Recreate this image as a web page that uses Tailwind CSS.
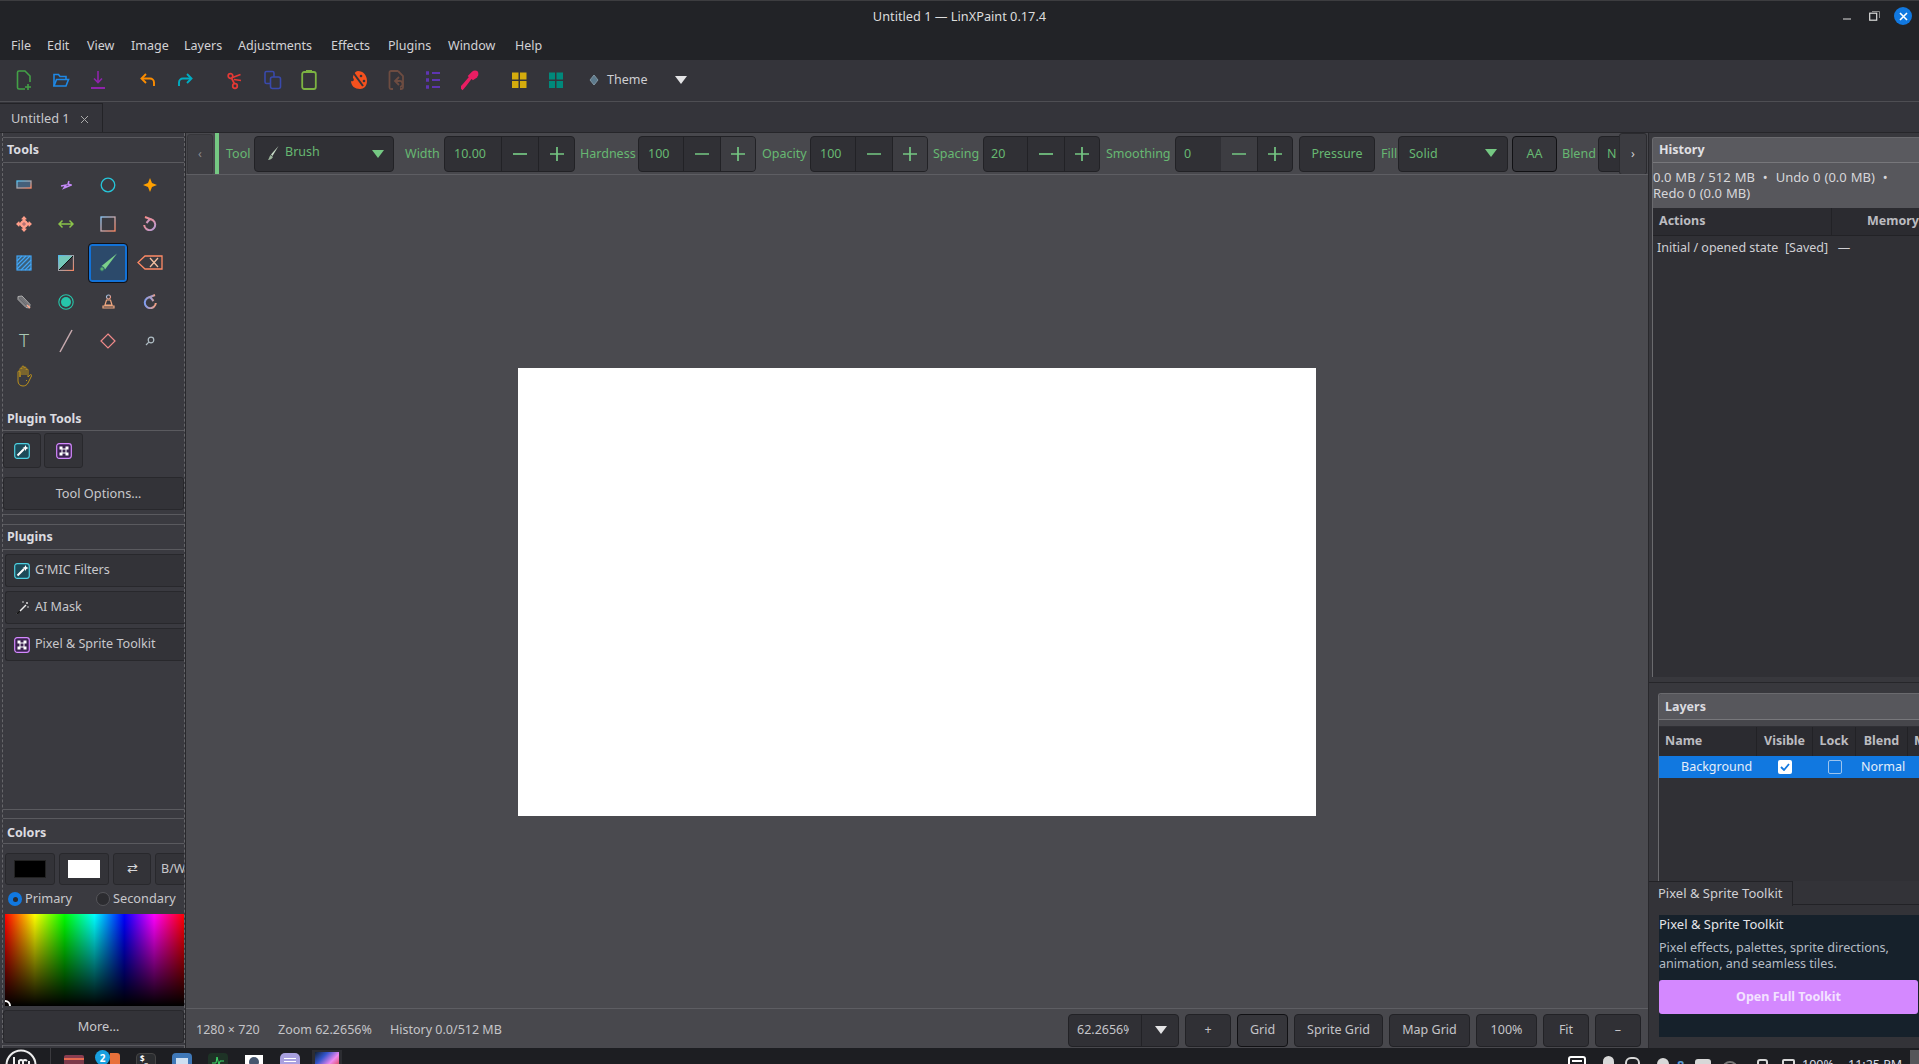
<!doctype html>
<html>
<head>
<meta charset="utf-8">
<script src="https://cdn.jsdelivr.net/npm/@tailwindcss/browser@4"></script>
<title>LinXPaint</title>
</head>
<body class="m-0 overflow-hidden bg-[#1d1e22]">
<svg class="absolute w-0 h-0">
  <defs>
    <linearGradient id="g1" x1="0" y1="0" x2="1" y2="1"><stop offset="0" stop-color="#4fc3f7"/><stop offset="1" stop-color="#ff8a65"/></linearGradient>
    <linearGradient id="g2" x1="0" y1="0" x2="1" y2="1"><stop offset="0" stop-color="#ff8a80"/><stop offset="1" stop-color="#b39ddb"/></linearGradient>
    <linearGradient id="g3" x1="0" y1="0" x2="1" y2="1"><stop offset="0" stop-color="#90caf9"/><stop offset="1" stop-color="#ff8a65"/></linearGradient>
    <linearGradient id="g5" x1="0" y1="0" x2="1" y2="0"><stop offset="0" stop-color="#7e9cf0"/><stop offset="1" stop-color="#f5a080"/></linearGradient>
  </defs>
</svg>
<div class="w-[1919px] h-[1064px] flex flex-col overflow-hidden font-['Noto_Sans',sans-serif] text-[12.5px] text-[#c8c8cc]">

  <!-- title bar -->
  <div class="relative h-[30px] shrink-0 bg-[#222327] border-t border-[#3d3d40] flex items-center justify-center text-[12.75px] text-[#dcdcdc] pt-[2px]">
    Untitled 1 — LinXPaint 0.17.4
    <svg class="absolute left-[1843px] top-[12px]" width="9" height="10" viewBox="0 0 9 10"><path d="M0 6h8" stroke="#ddd" stroke-width="1"/></svg>
    <svg class="absolute left-[1869px] top-[9px]" width="11" height="11" viewBox="0 0 11 11"><path d="M3 1.5h7.5V8" fill="none" stroke="#888" stroke-width="1"/><rect x=".7" y="3.2" width="7" height="7" fill="none" stroke="#ddd" stroke-width="1.2"/></svg>
    <div class="absolute left-[1894px] top-[6px] w-[18px] h-[18px] rounded-full bg-[#1178e0] flex items-center justify-center">
      <svg width="9" height="9" viewBox="0 0 9 9"><path d="M1 1l7 7M8 1l-7 7" stroke="#fff" stroke-width="1.6"/></svg>
    </div>
  </div>

  <!-- menu bar -->
  <div class="h-[30px] shrink-0 bg-[#222327] flex items-center pl-[11px] pt-[3px] text-[12.5px] text-[#d2d2d6]">
    <span class="w-[36px]">File</span><span class="w-[40px]">Edit</span><span class="w-[44px]">View</span><span class="w-[53px]">Image</span><span class="w-[54px]">Layers</span><span class="w-[93px]">Adjustments</span><span class="w-[57px]">Effects</span><span class="w-[60px]">Plugins</span><span class="w-[67px]">Window</span><span>Help</span>
  </div>

  <!-- main toolbar -->
  <div class="relative h-[42px] shrink-0 bg-[#34343a] border-b border-[#4e4e53] flex items-center pb-[1px]">
    <svg class="ml-[16px]" width="16" height="22" viewBox="0 0 16 22" fill="none" stroke="#43a047" stroke-width="1.6"><path d="M9 20H3a1.5 1.5 0 0 1-1.5-1.5v-15A1.5 1.5 0 0 1 3 2h6l5 5v6"/><path d="M12 15v6M9 18h6"/></svg>
    <svg class="ml-[20px]" width="18" height="18" viewBox="0 0 18 18" fill="none" stroke="#1e88e5" stroke-width="1.6"><path d="M2 15V3.5h4.5l1.5 2h6v3"/><path d="M2 15l2.5-6.5h12L14 15z"/></svg>
    <svg class="ml-[20px]" width="16" height="20" viewBox="0 0 16 20" fill="none" stroke="#8e24aa" stroke-width="1.6"><path d="M8 1v11M4 8.5l4 4 4-4"/><path d="M1 18h14" stroke-width="2"/></svg>
    <svg class="ml-[33px]" width="18" height="18" viewBox="0 0 18 18" fill="none" stroke="#fb8c00" stroke-width="1.9"><path d="M7 3L2.5 7.5 7 12"/><path d="M3 7.5h8a4 4 0 0 1 4 4V15"/></svg>
    <svg class="ml-[19px]" width="18" height="18" viewBox="0 0 18 18" fill="none" stroke="#00acc1" stroke-width="1.9"><path d="M11 3l4.5 4.5L11 12"/><path d="M15 7.5H7a4 4 0 0 0-4 4V15"/></svg>
    <svg class="ml-[33px]" width="16" height="20" viewBox="0 0 16 20" fill="none" stroke="#e53935" stroke-width="1.7"><circle cx="3.5" cy="6" r="2.3"/><circle cx="8" cy="16" r="2.3"/><path d="M5.5 7.5l8-3M4.5 8l3 6M7 9.5l7 1"/></svg>
    <svg class="ml-[21px]" width="18" height="20" viewBox="0 0 18 20" fill="none" stroke="#3949ab" stroke-width="1.6"><rect x="1" y="1.5" width="9" height="12" rx="1.5"/><rect x="6.5" y="7" width="10" height="11.500" rx="2" fill="#34343a"/></svg>
    <svg class="ml-[19px]" width="16" height="22" viewBox="0 0 16 22" fill="none" stroke="#7cb342" stroke-width="1.8"><rect x="1.2" y="3" width="13.6" height="17" rx="2"/><path d="M5 2.5h6" stroke-width="3"/></svg>
    <svg class="ml-[33px]" width="18" height="22" viewBox="0 0 18 22" fill="#f4511e"><path d="M8 2c5 0 9 4 9 10 0 5-3 8-7 8-5 0-9-3-9-8 2 1 4-1 2-3 0-3 2-7 5-7z"/><path d="M2 2l11 15" stroke="#34343a" stroke-width="2"/><circle cx="11" cy="7" r="1.3" fill="#34343a"/><circle cx="14" cy="12" r="1.3" fill="#34343a"/></svg>
    <svg class="ml-[20px]" width="17" height="22" viewBox="0 0 17 22" fill="none" stroke="#6d4c41" stroke-width="1.8"><path d="M10 2H3a1.5 1.5 0 0 0-1.5 1.5v15A1.5 1.5 0 0 0 3 20h2"/><path d="M10 2l5 5v11.5A1.5 1.5 0 0 1 13.500 20H12"/><path d="M11 8l-4 4 4 4M7 12h4a3 3 0 0 1 1 6"/></svg>
    <svg class="ml-[20px]" width="16" height="20" viewBox="0 0 16 20" fill="none" stroke="#5e35b1" stroke-width="2"><path d="M1 3h3M1 10h3M1 17h3" stroke-width="3.400"/><path d="M7 3h8M7 10h8M7 17h8"/></svg>
    <svg class="ml-[20px]" width="18" height="22" viewBox="0 0 18 22" fill="#e91e63"><path d="M11 4l4 4-3 2-1.500-1.500-6 8-3 3.500-1.500-1.500 3-3.500 6-7L8 7z" stroke="#e91e63" stroke-width="1.800"/><circle cx="14" cy="5" r="3.400"/></svg>
    <svg class="ml-[33px]" width="15" height="20" viewBox="0 0 15 20" fill="#d4ac0d"><rect x="0" y="2.500" width="6.500" height="7"/><rect x="8" y="2.500" width="6.500" height="7"/><rect x="0" y="11" width="6.500" height="7"/><rect x="8" y="11" width="6.500" height="7"/></svg>
    <svg class="ml-[22px]" width="14" height="20" viewBox="0 0 14 20" fill="#00897b"><rect x="0" y="2.500" width="6" height="7"/><rect x="7.500" y="2.500" width="6.500" height="7"/><rect x="0" y="11" width="6" height="7"/><rect x="7.500" y="11" width="6.500" height="7"/></svg>
    <svg class="ml-[26px]" width="10" height="14" viewBox="0 0 10 14"><path d="M5 2l4 5-4 5-4-5z" fill="#5d7a8c" stroke="#8196a3"/></svg>
    <span class="ml-[8px] text-[#cfcfd3] text-[12.5px] pt-[1px]">Theme</span>
    <svg class="ml-[28px]" width="12" height="8" viewBox="0 0 12 8"><path d="M0 0h12L6 8z" fill="#e4e4e6"/></svg>
  </div>

  <!-- tab strip -->
  <div class="h-[31px] shrink-0 bg-[#34343a] flex items-end pt-[2px] border-b border-[#26262a]">
    <div class="w-[103px] h-[29px] border-t border-r border-[#232327] bg-[#34343a] flex items-center pl-[11px] pt-[2px] text-[12.75px] text-[#c8c8cc]">
      <span>Untitled 1</span>
      <svg class="ml-[10px]" width="9" height="9" viewBox="0 0 9 9"><path d="M1 1l7 7M8 1l-7 7" stroke="#aaa" stroke-width="1"/></svg>
    </div>
  </div>

  <!-- main area -->
  <div class="flex-1 min-h-0 flex">

    <!-- left dock -->
    <div class="w-[186px] shrink-0 bg-[#3a3a40] border-r border-[#28282c] flex flex-col pl-[2px] pr-[1px]">
      <div class="flex-1 min-h-0 flex flex-col border-x border-dashed border-[#66666a] w-[183px] overflow-hidden">
        <!-- tools -->
        <div class="mt-[4px] h-[26px] shrink-0 border-y border-[#5a5a5f] flex items-center pl-[4px] pt-[1px] font-bold text-[12.5px] text-[#dcdce0]">Tools</div>
        <div class="mt-[2px] shrink-0 grid grid-cols-[42px_42px_42px_42px] auto-rows-[39px] justify-items-center items-center">
          <svg width="16" height="10" viewBox="0 0 16 10"><rect x="1" y="1" width="14" height="7" fill="#45607a" stroke="url(#g1)" stroke-width="1.300"/></svg>
          <svg width="12" height="10" viewBox="0 0 12 10" fill="none" stroke="#c58af9" stroke-width="1.500"><path d="M1 6l5-1-2 3 7-3-3-1 1-3"/></svg>
          <svg width="16" height="16" viewBox="0 0 16 16"><circle cx="8" cy="8" r="6.800" fill="none" stroke="#26c6da" stroke-width="1.300"/></svg>
          <svg width="14" height="14" viewBox="0 0 14 14"><path d="M7 0l2 5 5 2-5 2-2 5-2-5-5-2 5-2z" fill="#ffa000"/></svg>

          <svg width="16" height="16" viewBox="0 0 16 16" fill="#ff9e8a"><path d="M8 0l3 3.200H9.500v2.300h-3V3.200H5zM8 16l-3-3.200h1.500v-2.300h3v2.300H11zM0 8l3.200-3v1.500h2.300v3H3.200V11zM16 8l-3.200 3V9.500h-2.300v-3h2.300V5z"/><circle cx="8" cy="8" r="3.800"/><path d="M6 8h4M8 6v4" stroke="#8a5a6a" stroke-width=".8"/></svg>
          <svg width="16" height="10" viewBox="0 0 16 10" fill="none" stroke="#8bc34a" stroke-width="1.500"><path d="M1 5h14M4.500 1.500L1 5l3.500 3.500M11.500 1.500L15 5l-3.500 3.500"/></svg>
          <svg width="16" height="16" viewBox="0 0 16 16"><rect x="1" y="1" width="14" height="14" fill="none" stroke="url(#g3)" stroke-width="1.300"/></svg>
          <svg width="14" height="15" viewBox="0 0 14 15" fill="none" stroke="url(#g2)" stroke-width="2"><path d="M2 1L7 3 3.500 7"/><path d="M6 3.200a5.500 5.500 0 1 1-4.800 5.800"/></svg>

          <svg width="16" height="16" viewBox="0 0 16 16"><rect x="1" y="1" width="14" height="14" fill="#3a5f7a" stroke="#42a5f5" stroke-width="1.200"/><path d="M1 6l5-5M1 10l9-9M1 14L14 1M5 15L15 5M9 15l6-6M13 15l2-2" stroke="#42a5f5" stroke-width="1.200"/></svg>
          <svg width="16" height="16" viewBox="0 0 16 16"><path d="M1 1h14L1 15z" fill="#74c7b8"/><path d="M15 1v14H1z" fill="#3a3a40"/><rect x=".6" y=".6" width="14.800" height="14.800" fill="none" stroke="url(#g1)" stroke-width="1.100"/><path d="M1 15L15 1" stroke="#111" stroke-width="1"/></svg>
          <div class="w-[38px] h-[38px] rounded-[3px] border-2 border-[#1272d8] outline outline-1 outline-[#101015] bg-[#2c4a6b] flex items-center justify-center">
            <svg width="20" height="20" viewBox="0 0 20 20"><path d="M19 .5L3.500 13 7 16.500z" fill="#7bd08a"/><circle cx="4" cy="16" r="2.200" fill="#5fb070" stroke="#26566b"/></svg>
          </div>
          <svg width="26" height="15" viewBox="0 0 26 15" fill="none" stroke="#ff8a65" stroke-width="1.300"><path d="M8 1h17v13H8L1 7.500z"/><path d="M13 3l8 9M21 3l-8 9" stroke="#f5c0a0"/></svg>

          <svg width="14" height="14" viewBox="0 0 14 14"><path d="M1 1.500L5 1 13 9.500l-.5 3.500-3.500-.5-8-8z" fill="#6a6a6e" stroke="#b0b0b0"/><path d="M3 2.500L11 11M2 4l8 8M5 2.500l7 8" stroke="#8a8a8e" stroke-width=".6"/><path d="M10 10l3 3" stroke="#ffab91" stroke-width="1.500"/></svg>
          <svg width="16" height="16" viewBox="0 0 16 16"><circle cx="8" cy="8" r="7.200" fill="none" stroke="#26c6aa" stroke-width="1.100"/><circle cx="8" cy="8" r="5" fill="#26c6aa"/></svg>
          <svg width="13" height="15" viewBox="0 0 13 15" fill="none" stroke="url(#g3)" stroke-width="1.200"><circle cx="6.500" cy="3" r="2"/><path d="M4.500 6h4L10 11H3zM1 14v-2h11v2z" stroke="#f0a880"/></svg>
          <svg width="14" height="15" viewBox="0 0 14 15" fill="none" stroke="url(#g5)" stroke-width="2"><path d="M12 1L7 3 10.500 7"/><path d="M8 3.200a5.500 5.500 0 1 0 4.800 5.800"/></svg>

          <span class="text-[19px] leading-none text-[#a9c8b4] font-light">T</span>
          <svg width="14" height="24" viewBox="0 0 14 24"><path d="M13 1L1 23" stroke="url(#g3)" stroke-width="1.500"/></svg>
          <svg width="16" height="16" viewBox="0 0 16 16"><path d="M8 1l7 7-7 7-7-7z" fill="none" stroke="#f08a8a" stroke-width="1.200"/></svg>
          <svg width="10" height="10" viewBox="0 0 10 10" fill="none" stroke="#b0bec5" stroke-width="1.200"><circle cx="6" cy="4" r="2.800"/><path d="M3.800 6.200L1 9"/></svg>

          <svg class="mt-[-7px]" width="16" height="22" viewBox="0 0 16 22" fill="none" stroke="#c89a18" stroke-width=".9"><path d="M4 12V4a1 1 0 0 1 2 0V2a1 1 0 0 1 2 0v1a1 1 0 0 1 2 0v2a1 1 0 0 1 2 0v7l2-2c1-1 2 0 1.500 1L12 18c-1 2-3 3-5 3-3 0-5-2-5-5V7a1 1 0 0 1 2 0z"/><path d="M6 4v6M8 3v7M10 5v5M11 15l-1 1"/></svg>
        </div>

        <!-- plugin tools -->
        <div class="mt-[6px] h-[26px] shrink-0 border-b border-[#5a5a5f] flex items-center pl-[4px] pt-[4px] font-bold text-[12.5px] text-[#dcdce0]">Plugin Tools</div>
        <div class="mt-[2px] h-[35px] shrink-0 flex gap-[3px]">
          <div class="w-[38px] rounded-[3px] border border-[#28282c] bg-[#333338] flex items-center justify-center">
            <svg width="16" height="16" viewBox="0 0 16 16"><rect x=".7" y=".7" width="14.600" height="14.600" rx="2.500" fill="#1d4a58" stroke="#4dd0e1" stroke-width="1.200"/><path d="M3.500 12.500L10 6" stroke="#fff" stroke-width="2"/><path d="M11.500 2l.9 2.100 2.100.9-2.100.9-.9 2.100-.9-2.100L8.500 5l2.100-.9z" fill="#fff"/></svg>
          </div>
          <div class="w-[39px] rounded-[3px] border border-[#28282c] bg-[#333338] flex items-center justify-center">
            <svg width="16" height="16" viewBox="0 0 16 16"><rect x=".7" y=".7" width="14.600" height="14.600" rx="2.500" fill="#3b2350" stroke="#d488ff" stroke-width="1.200"/><rect x="5.500" y="5.500" width="5" height="5" fill="#fff"/><rect x="3.500" y="3.500" width="3" height="3" fill="#fff"/><rect x="9.500" y="3.500" width="3" height="3" fill="#fff"/><rect x="3.500" y="9.500" width="3" height="3" fill="#fff"/><rect x="9.500" y="9.500" width="3" height="3" fill="#fff"/><rect x="6.500" y="6.500" width="3" height="3" fill="#3b2350"/></svg>
          </div>
        </div>
        <div class="mt-[9px] h-[33px] shrink-0 rounded-[3px] border border-[#28282c] bg-[#333338] flex items-center justify-center text-[12.75px] text-[#c8c8cc] pl-[10px] pt-[1px]">Tool Options…</div>
        <div class="mt-[4px] h-[11px] shrink-0 border-y border-[#5a5a5f]"></div>

        <!-- plugins -->
        <div class="h-[25px] shrink-0 border-b border-[#5a5a5f] flex items-center pl-[4px] font-bold text-[12.5px] text-[#dcdce0]">Plugins</div>
        <div class="mt-[4px] pl-[2px] flex flex-col gap-[4px] shrink-0">
          <div class="h-[33px] rounded-l-[3px] border border-r-0 border-[#28282c] bg-[#333338] flex items-center pl-[8px] gap-[5px]">
            <svg width="16" height="16" viewBox="0 0 16 16"><rect x=".7" y=".7" width="14.600" height="14.600" rx="2.500" fill="#1d4a58" stroke="#4dd0e1" stroke-width="1.200"/><path d="M3.500 12.500L10 6" stroke="#fff" stroke-width="2"/><path d="M11.500 2l.9 2.100 2.100.9-2.100.9-.9 2.100-.9-2.100L8.500 5l2.100-.9z" fill="#fff"/></svg>
            <span class="text-[12.6px]">G'MIC Filters</span>
          </div>
          <div class="h-[33px] rounded-l-[3px] border border-r-0 border-[#28282c] bg-[#333338] flex items-center pl-[8px] gap-[5px]">
            <svg width="16" height="16" viewBox="0 0 16 16"><path d="M3 14L12 5" stroke="#eee" stroke-width="1.500"/><path d="M3 14l3-3" stroke="#111" stroke-width="1.800"/><circle cx="13" cy="3" r="1" fill="#ddd"/><circle cx="9" cy="2" r=".8" fill="#ddd"/><circle cx="14" cy="7" r=".8" fill="#ddd"/></svg>
            <span class="text-[12.6px]">AI Mask</span>
          </div>
          <div class="h-[33px] rounded-l-[3px] border border-r-0 border-[#28282c] bg-[#333338] flex items-center pl-[8px] gap-[5px]">
            <svg width="16" height="16" viewBox="0 0 16 16"><rect x=".7" y=".7" width="14.600" height="14.600" rx="2.500" fill="#3b2350" stroke="#d488ff" stroke-width="1.200"/><rect x="5.500" y="5.500" width="5" height="5" fill="#fff"/><rect x="3.500" y="3.500" width="3" height="3" fill="#fff"/><rect x="9.500" y="3.500" width="3" height="3" fill="#fff"/><rect x="3.500" y="9.500" width="3" height="3" fill="#fff"/><rect x="9.500" y="9.500" width="3" height="3" fill="#fff"/><rect x="6.500" y="6.500" width="3" height="3" fill="#3b2350"/></svg>
            <span class="text-[12.6px]">Pixel &amp; Sprite Toolkit</span>
          </div>
        </div>
        <div class="flex-1 min-h-0"></div>

        <!-- colors -->
        <div class="h-[10px] shrink-0 border-y border-[#5a5a5f]"></div>
        <div class="h-[25px] shrink-0 border-b border-[#5a5a5f] flex items-center pl-[4px] pt-[4px] font-bold text-[12.5px] text-[#dcdce0]">Colors</div>
        <div class="mt-[9px] h-[32px] shrink-0 flex gap-[4px] pl-[2px]">
          <div class="w-[50px] shrink-0 rounded-[3px] border border-[#28282c] bg-[#333338] flex items-center justify-center"><div class="w-[32px] h-[18px] bg-black border border-[#222]"></div></div>
          <div class="w-[50px] shrink-0 rounded-[3px] border border-[#28282c] bg-[#333338] flex items-center justify-center"><div class="w-[32px] h-[18px] bg-white"></div></div>
          <div class="w-[38px] shrink-0 rounded-[3px] border border-[#28282c] bg-[#333338] flex items-center justify-center text-[13px] text-[#d8d8dc]">⇄</div>
          <div class="w-[36px] shrink-0 rounded-l-[3px] border border-[#28282c] bg-[#333338] flex items-center pl-[5px] text-[#c8c8cc]">B/W</div>
        </div>
        <div class="mt-[6px] h-[16px] shrink-0 flex items-center pl-[5px] text-[12.75px]">
          <div class="w-[14px] h-[14px] rounded-full bg-[#1178e0] flex items-center justify-center"><div class="w-[5px] h-[5px] rounded-full bg-[#2a2a2e]"></div></div>
          <span class="ml-[3px] w-[71px]">Primary</span>
          <div class="w-[14px] h-[14px] rounded-full bg-[#2c2c30] border border-[#55555a]"></div>
          <span class="ml-[3px]">Secondary</span>
        </div>
        <div class="relative mt-[7px] ml-[2px] h-[92px] shrink-0 bg-[linear-gradient(to_bottom,transparent,#000),linear-gradient(to_right,#f00,#ff0,#0f0,#0ff,#00f,#f0f,#f00)] overflow-hidden">
          <div class="absolute left-[-6px] bottom-[-6px] w-[12px] h-[12px] rounded-full border-2 border-white"></div>
        </div>
        <div class="mt-[4px] h-[33px] shrink-0 rounded-[3px] border border-[#28282c] bg-[#333338] flex items-center justify-center pl-[10px] pt-[1px] text-[12.75px]">More…</div>
        <div class="mt-[2px] h-[3px] shrink-0 border-t border-[#5a5a5f]"></div>
      </div>
    </div>

    <!-- centre -->
    <div class="flex-1 min-w-0 flex flex-col bg-[#4a4a4f]">
      <!-- tool options bar -->
      <div class="h-[42px] shrink-0 flex items-center bg-[#48484d] border-b border-[#5e5e63] overflow-hidden pt-[1px] text-[12.5px] text-[#67b872] relative">
        <div class="ml-[1px] w-[26px] h-[41px] shrink-0 bg-[#3e3e43] border border-[#36363a] rounded-[3px] flex items-center justify-center text-[#8a8a8e]">‹</div>
        <div class="ml-[2px] w-[4px] h-[42px] shrink-0 bg-[#75c883]"></div>
        <span class="ml-[7px] w-[28px] shrink-0">Tool</span>
        <div class="h-[36px] w-[140px] shrink-0 rounded-[4px] border border-[#222226] bg-[#303035] flex items-center pl-[11px] pb-[3px]">
          <svg width="14" height="16" viewBox="0 0 14 16"><path d="M12.500 1L5 9.500l1.500 1.500z" fill="#c8dcc8"/><path d="M4.500 10L7 12c-1 2-3 3-5 3 1-1 1-3 2.500-5z" fill="#9bb39b"/></svg>
          <span class="ml-[5px]">Brush</span>
          <svg class="ml-auto mr-[9px] mt-[3px]" width="12" height="8" viewBox="0 0 12 8"><path d="M0 0h12L6 8z" fill="#75c883"/></svg>
        </div>
        <span class="ml-[11px] w-[39px] shrink-0">Width</span>
        <div class="h-[36px] w-[131px] shrink-0 flex rounded-[4px] border border-[#222226] bg-[#303035]">
          <div class="w-[57px] border-r border-[#222226] flex items-center pl-[9px]">10.00</div>
          <div class="w-[37px] border-r border-[#222226] flex items-center justify-center"><svg width="14" height="14" viewBox="0 0 14 14"><path d="M0 7h14" stroke="#75c883" stroke-width="1.700"/></svg></div>
          <div class="flex-1 flex items-center justify-center"><svg width="14" height="14" viewBox="0 0 14 14"><path d="M0 7h14M7 0v14" stroke="#75c883" stroke-width="1.700"/></svg></div>
        </div>
        <span class="ml-[5px] w-[58px] shrink-0">Hardness</span>
        <div class="h-[36px] w-[118px] shrink-0 flex rounded-[4px] border border-[#222226] bg-[#303035] overflow-hidden">
          <div class="w-[45px] border-r border-[#222226] flex items-center pl-[9px]">100</div>
          <div class="w-[37px] border-r border-[#222226] flex items-center justify-center"><svg width="14" height="14" viewBox="0 0 14 14"><path d="M0 7h14" stroke="#75c883" stroke-width="1.700"/></svg></div>
          <div class="flex-1 bg-[#3d3d42] flex items-center justify-center"><svg width="14" height="14" viewBox="0 0 14 14"><path d="M0 7h14M7 0v14" stroke="#75c883" stroke-width="1.700"/></svg></div>
        </div>
        <span class="ml-[6px] w-[48px] shrink-0">Opacity</span>
        <div class="h-[36px] w-[118px] shrink-0 flex rounded-[4px] border border-[#222226] bg-[#303035] overflow-hidden">
          <div class="w-[45px] border-r border-[#222226] flex items-center pl-[9px]">100</div>
          <div class="w-[37px] border-r border-[#222226] flex items-center justify-center"><svg width="14" height="14" viewBox="0 0 14 14"><path d="M0 7h14" stroke="#75c883" stroke-width="1.700"/></svg></div>
          <div class="flex-1 bg-[#3d3d42] flex items-center justify-center"><svg width="14" height="14" viewBox="0 0 14 14"><path d="M0 7h14M7 0v14" stroke="#75c883" stroke-width="1.700"/></svg></div>
        </div>
        <span class="ml-[5px] w-[50px] shrink-0">Spacing</span>
        <div class="h-[36px] w-[117px] shrink-0 flex rounded-[4px] border border-[#222226] bg-[#303035]">
          <div class="w-[44px] border-r border-[#222226] flex items-center pl-[7px]">20</div>
          <div class="w-[37px] border-r border-[#222226] flex items-center justify-center"><svg width="14" height="14" viewBox="0 0 14 14"><path d="M0 7h14" stroke="#75c883" stroke-width="1.700"/></svg></div>
          <div class="flex-1 flex items-center justify-center"><svg width="14" height="14" viewBox="0 0 14 14"><path d="M0 7h14M7 0v14" stroke="#75c883" stroke-width="1.700"/></svg></div>
        </div>
        <span class="ml-[6px] w-[69px] shrink-0">Smoothing</span>
        <div class="h-[36px] w-[118px] shrink-0 flex rounded-[4px] border border-[#222226] bg-[#303035] overflow-hidden">
          <div class="w-[45px] flex items-center pl-[8px]">0</div>
          <div class="w-[37px] border-r border-[#222226] bg-[#3d3d42] flex items-center justify-center"><svg width="14" height="14" viewBox="0 0 14 14"><path d="M0 7h14" stroke="#75c883" stroke-width="1.700"/></svg></div>
          <div class="flex-1 flex items-center justify-center"><svg width="14" height="14" viewBox="0 0 14 14"><path d="M0 7h14M7 0v14" stroke="#75c883" stroke-width="1.700"/></svg></div>
        </div>
        <div class="ml-[6px] h-[36px] w-[76px] shrink-0 rounded-[4px] border border-[#222226] bg-[#303035] flex items-center justify-center">Pressure</div>
        <span class="ml-[6px] w-[17px] shrink-0">Fill</span>
        <div class="h-[36px] w-[110px] shrink-0 rounded-[4px] border border-[#222226] bg-[#303035] flex items-center pl-[10px]">
          <span>Solid</span>
          <svg class="ml-auto mr-[10px] mb-[3px]" width="12" height="8" viewBox="0 0 12 8"><path d="M0 0h12L6 8z" fill="#75c883"/></svg>
        </div>
        <div class="ml-[4px] h-[36px] w-[45px] shrink-0 rounded-[4px] border border-[#111114] bg-[#36363b] flex items-center justify-center">AA</div>
        <span class="ml-[5px] w-[36px] shrink-0">Blend</span>
        <div class="h-[36px] w-[30px] shrink-0 rounded-l-[4px] border border-[#222226] bg-[#303035] flex items-center pl-[8px]">N</div>
        <div class="absolute right-[1px] top-0 w-[28px] h-[42px] bg-[#3c3c41] border border-[#2a2a2e] rounded-[3px] flex items-center justify-center text-[#cfcfd3]">›</div>
      </div>

      <!-- canvas -->
      <div class="flex-1 min-h-0 flex items-center justify-center">
        <div class="w-[798px] h-[448px] bg-white"></div>
      </div>

      <!-- status bar -->
      <div class="h-[40px] shrink-0 bg-[#48484d] border-t border-[#5e5e63] flex items-center pl-[10px] text-[12.5px] text-[#c4c4c8]">
        <span class="w-[82px] pt-[4px]">1280 × 720</span>
        <span class="w-[112px] pt-[4px]">Zoom 62.2656%</span>
        <span class="pt-[4px]">History 0.0/512 MB</span>
        <div class="ml-auto flex gap-[6px] mr-[7px] pt-[3px]">
          <div class="w-[111px] h-[33px] flex rounded-[4px] border border-[#222226] bg-[#303035]">
            <div class="w-[73px] border-r border-[#222226] flex items-center pl-[8px]"><span class="w-[52px] overflow-hidden whitespace-nowrap">62.2656%</span></div>
            <div class="flex-1 flex items-center justify-center pl-[2px]"><svg width="12" height="8" viewBox="0 0 12 8"><path d="M0 0h12L6 8z" fill="#e4e4e6"/></svg></div>
          </div>
          <div class="w-[46px] h-[33px] rounded-[4px] border border-[#222226] bg-[#303035] flex items-center justify-center">+</div>
          <div class="w-[51px] h-[33px] rounded-[4px] border border-[#111114] bg-[#36363b] flex items-center justify-center">Grid</div>
          <div class="w-[89px] h-[33px] rounded-[4px] border border-[#222226] bg-[#303035] flex items-center justify-center">Sprite Grid</div>
          <div class="w-[81px] h-[33px] rounded-[4px] border border-[#222226] bg-[#303035] flex items-center justify-center">Map Grid</div>
          <div class="w-[61px] h-[33px] rounded-[4px] border border-[#222226] bg-[#303035] flex items-center justify-center">100%</div>
          <div class="w-[46px] h-[33px] rounded-[4px] border border-[#222226] bg-[#303035] flex items-center justify-center">Fit</div>
          <div class="w-[46px] h-[33px] rounded-[4px] border border-[#222226] bg-[#303035] flex items-center justify-center">–</div>
        </div>
      </div>
    </div>

    <!-- right dock -->
    <div class="w-[271px] shrink-0 bg-[#38383d] border-l border-[#28282c] flex flex-col">
      <div class="h-[550px] shrink-0 pl-[3px] pt-[4px] pb-[5px] border-b border-[#26262a]">
        <div class="h-full flex flex-col border-l border-t border-[#6a6a6e] rounded-tl-[3px] bg-[#57575c] overflow-hidden">
          <div class="h-[25px] shrink-0 border-b border-[#77777b] flex items-center pl-[6px] pt-[1px] font-bold text-[#e0e0e4] bg-[#5a5a5f]">History</div>
          <div class="h-[45px] shrink-0 leading-[15.500px] pt-[7px] text-[13px] [word-spacing:0.6px] text-[#d6d6da] whitespace-pre">0.0 MB / 512 MB  •  Undo 0 (0.0 MB)  •
Redo 0 (0.0 MB)</div>
          <div class="flex-1 min-h-0 bg-[#303035] flex flex-col">
            <div class="h-[28px] shrink-0 bg-[#2b2b30] border-b border-[#222226] flex items-center font-bold text-[#bcbcc0]">
              <div class="w-[179px] h-full border-r border-[#222226] flex items-center pl-[6px]">Actions</div>
              <div class="flex-1 flex items-center justify-end whitespace-nowrap overflow-hidden"><span class="ml-[35px]">Memory</span></div>
            </div>
            <div class="pl-[4px] pt-[3px] text-[#cfcfd3] whitespace-pre">Initial / opened state  [Saved]   —</div>
          </div>
        </div>
      </div>
      <div class="h-[198px] shrink-0 pl-[9px] pt-[10px]">
        <div class="h-full flex flex-col border-l border-t border-[#6a6a6e] rounded-tl-[3px] overflow-hidden">
          <div class="h-[26px] shrink-0 border-b border-[#77777b] flex items-center pl-[6px] pt-[2px] font-bold text-[#dcdce0] bg-[#57575c]">Layers</div>
          <div class="h-[6px] shrink-0 bg-[#46464b]"></div>
          <div class="flex-1 bg-[#303035] flex flex-col pt-[1px]">
            <div class="h-[29px] shrink-0 bg-[#2b2b30] flex font-bold text-[#bcbcc0] overflow-hidden">
              <div class="w-[98px] shrink-0 border-r border-[#222226] flex items-center pl-[6px]">Name</div>
              <div class="w-[56px] shrink-0 border-r border-[#222226] flex items-center justify-center">Visible</div>
              <div class="w-[43px] shrink-0 border-r border-[#222226] flex items-center justify-center">Lock</div>
              <div class="w-[52px] shrink-0 border-r border-[#222226] flex items-center justify-center">Blend</div>
              <div class="shrink-0 flex items-center pl-[6px]">M</div>
            </div>
            <div class="h-[22px] shrink-0 bg-[#1178e0] flex items-center text-[#e4eefa]">
              <div class="w-[98px] pl-[22px]">Background</div>
              <div class="w-[56px] flex justify-center"><div class="w-[14px] h-[14px] rounded-[2px] bg-white flex items-center justify-center"><svg width="10" height="8" viewBox="0 0 10 8"><path d="M1 4l3 3 5-6" fill="none" stroke="#1178e0" stroke-width="1.800"/></svg></div></div>
              <div class="w-[43px] flex justify-center"><div class="w-[14px] h-[14px] rounded-[2px] border border-[#9cc4ee]"></div></div>
              <div class="pl-[5px]">Normal</div>
            </div>
          </div>
        </div>
      </div>
      <div class="flex-1 min-h-0 flex flex-col bg-[#333338]">
        <div class="h-[24px] shrink-0 border-b border-[#222226] relative">
          <div class="w-[144px] h-[25px] border-t border-r border-[#222226] bg-[#333338] flex items-center pl-[9px] text-[13px] text-[#d0d0d4] whitespace-nowrap">Pixel &amp; Sprite Toolkit</div>
        </div>
        <div class="ml-[10px] mt-[10px] h-[122px] bg-[#16212b] flex flex-col text-[13px]">
          <div class="mt-[1px] h-[17px] shrink-0 leading-[17px] text-[#e4e4e8] whitespace-nowrap">Pixel &amp; Sprite Toolkit</div>
          <div class="mt-[7px] leading-[16px] text-[#b4bcc4] text-[12.6px]">Pixel effects, palettes, sprite directions,<br>animation, and seamless tiles.</div>
          <div class="mt-[8px] h-[34px] rounded-[3px] bg-[#d488ff] flex items-center justify-center font-bold text-[#f3e2ff] text-[12.5px] mr-[1px]">Open Full Toolkit</div>
        </div>
      </div>
    </div>
  </div>

  <!-- taskbar -->
  <div class="relative h-[16px] shrink-0 bg-[#1d1e22] overflow-hidden flex items-start">
    <svg class="absolute left-[5px] top-[1px]" width="32" height="32" viewBox="0 0 32 32" fill="none" stroke="#eee" stroke-width="2"><circle cx="16" cy="16" r="14.500"/><path d="M9 8v10q0 4 4 4h8a3 3 0 0 0 3-3v-7M14 18v-6q2-2 4 0v6M18 12q2-2 4 0"/></svg>
    <div class="ml-[50px] w-px h-[16px] bg-[#3a3a3e]"></div>
    <div class="ml-[13px] mt-[7px] w-[20px] h-[16px] rounded-t-[2px] bg-[#7c3a4a] border-t-[3px] border-[#8a3d50]"><div class="h-[2px] bg-[#e86a50]"></div></div>
    <div class="ml-[26px] mt-[5px] w-[10px] h-[16px] rounded-tr-[3px] bg-[#e8703a]"></div>
    <div class="absolute left-[95px] top-[2px] w-[15px] h-[15px] rounded-full bg-[#18a0e0] text-white text-[10px] font-bold flex items-center justify-center leading-none">2</div>
    <div class="ml-[16px] mt-[5px] w-[20px] h-[16px] rounded-t-[4px] bg-[#2b2d30] border border-[#444] text-[8px] leading-[10px] font-bold text-white pl-[3px]">$_</div>
    <div class="ml-[16px] mt-[5px] w-[20px] h-[16px] rounded-t-[4px] bg-[#3f78b8] flex justify-center pt-[5px]"><div class="w-[12px] h-[9px] bg-[#cfe0f2]"></div></div>
    <div class="ml-[16px] mt-[5px] w-[20px] h-[16px] rounded-t-[4px] bg-[#1e3326] flex justify-center"><svg width="14" height="14" viewBox="0 0 14 14"><path d="M1 10h4l1-6 2 8 1-4h4" fill="none" stroke="#3ddc6a"/></svg></div>
    <div class="ml-[17px] mt-[7px] w-[18px] h-[16px] bg-white flex justify-center pt-[2px]"><div class="w-[10px] h-[10px] rounded-full bg-[#46566e]"></div></div>
    <div class="ml-[17px] mt-[5px] w-[20px] h-[16px] rounded-t-[5px] bg-[#a8a0e0] flex flex-col items-center pt-[5px] gap-[2px]"><div class="w-[12px] h-[1px] bg-white"></div><div class="w-[12px] h-[1px] bg-white"></div></div>
    <div class="ml-[12px] mt-[2px] w-[30px] h-[16px] bg-[#2c2d32] flex justify-center pt-[2px]"><div class="w-[24px] h-[15px] bg-[linear-gradient(135deg,#123,#35c,#e8e,#d44)]"></div></div>

    <div class="absolute left-[1568px] top-[8px] w-[18px] h-[15px] rounded-t-[3px] border-2 border-white px-[2px] pt-[2px]"><div class="h-[2px] bg-white"></div></div>
    <div class="absolute left-[1603px] top-[8px] w-[11px] h-[13px] rounded-full bg-[#d8d8d8]"></div>
    <div class="absolute left-[1625px] top-[9px] w-[15px] h-[14px] rounded-t-[6px] border-2 border-[#d8d8d8]"></div>
    <div class="absolute left-[1657px] top-[10px] w-[12px] h-[13px] rounded-full bg-[#d8d8d8]"></div>
    <span class="absolute left-[1677px] top-[9px] text-[#5b9bd5] text-[13px] leading-[16px] font-bold">8</span>
    <div class="absolute left-[1695px] top-[11px] w-[16px] h-[13px] rounded-t-[3px] bg-[#d8d8d8]"></div>
    <div class="absolute left-[1722px] top-[13px] w-[16px] h-[16px] rounded-full border-2 border-[#777]"></div>
    <div class="absolute left-[1757px] top-[11px] w-[11px] h-[15px] rounded-t-[3px] border-2 border-[#d8d8d8]"></div>
    <div class="absolute left-[1782px] top-[11px] w-[13px] h-[14px] rounded-t-[2px] border-2 border-[#d8d8d8]"></div>
    <span class="absolute left-[1802px] top-[9px] text-[12.5px] leading-[16px] text-[#d8dce8]">100%</span>
    <span class="absolute left-[1848px] top-[9px] text-[12.5px] leading-[16px] text-[#d8dce8]">11:25 PM</span>
    <div class="absolute left-[1910px] top-[2px] w-[9px] h-[15px] bg-[#56565a]"></div>
  </div>
</div>
</body>
</html>
